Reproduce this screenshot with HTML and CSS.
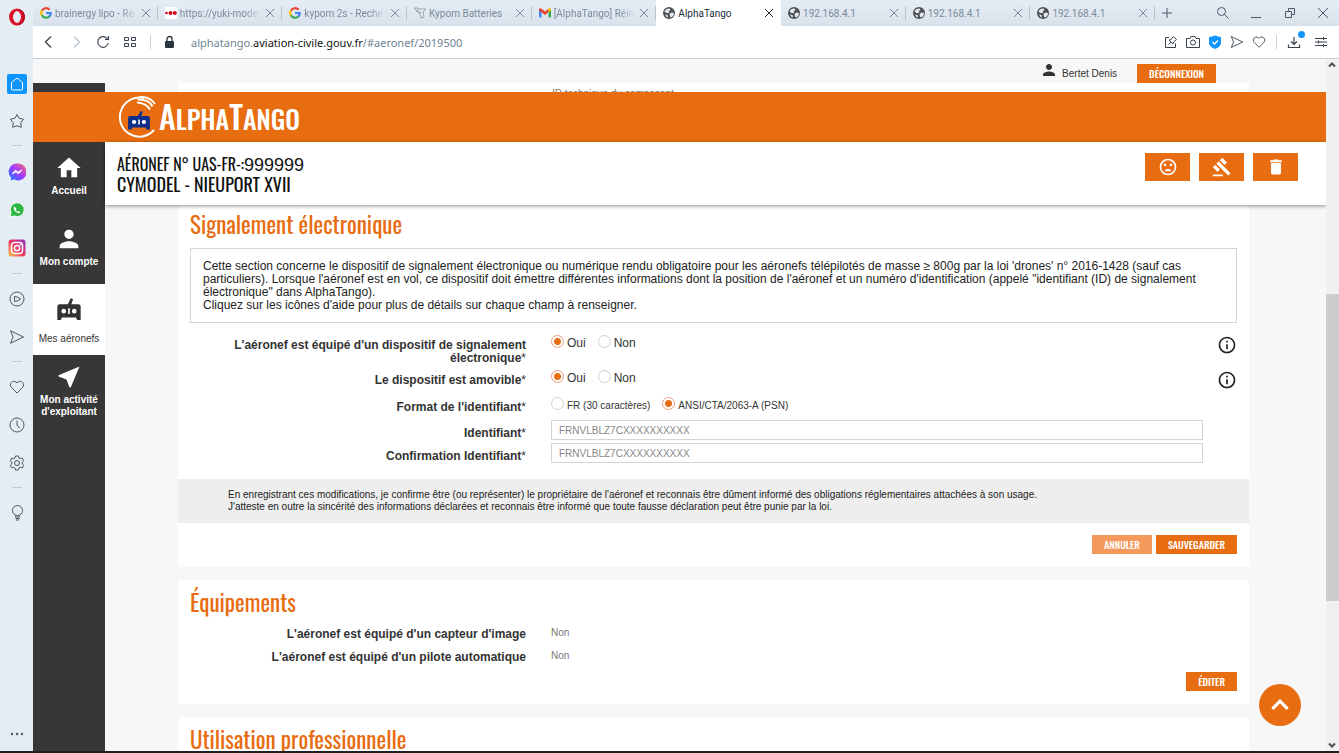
FILE: index.html
```
<!DOCTYPE html>
<html lang="fr">
<head>
  <meta charset="UTF-8">
  <meta name="viewport" content="width=device-width, initial-scale=1.0">
  <title>AlphaTango</title>
  <link rel="stylesheet" href="styles.css">
</head>
<body>

  <!-- shared icons -->
  <svg class="sprite" aria-hidden="true">
    <symbol id="i-x" viewBox="0 0 12 12"><path d="M2 2l8 8M10 2l-8 8" fill="none" stroke="currentColor"/></symbol>
    <symbol id="i-globe" viewBox="0 0 12 12"><circle cx="6" cy="6" r="6" fill="#4d5156"/><path d="M2 3.500Q4 1 6.500 1.500L7.500 3 5.500 4.500 6.500 6H3.500L1.500 4.500zM6.500 7L8.500 5.500 11 6Q11 9 8 10.500L7 9.500zM2 7.500L4.500 8 5 10.500Q3 10 2 7.500z" fill="#e6ebf0"/></symbol>
    <symbol id="i-google" viewBox="0 0 12 12" fill="none" stroke-width="2.200"><path d="M9.600 2.700A4.800 4.800 0 0 0 1.900 3.700" stroke="#ea4335"/><path d="M1.900 3.600a4.800 4.800 0 0 0 0 4.800" stroke="#fbbc05"/><path d="M1.900 8.300a4.800 4.800 0 0 0 7.300 1.300" stroke="#34a853"/><path d="M9.100 9.700A4.800 4.800 0 0 0 10.800 6H6" stroke="#4285f4"/></symbol>
    <symbol id="i-user" viewBox="0 0 24 24"><path fill="currentColor" d="M12 12c2.210 0 4-1.790 4-4s-1.790-4-4-4-4 1.790-4 4 1.790 4 4 4zm0 2c-2.670 0-8 1.340-8 4v2h16v-2c0-2.660-5.330-4-8-4z"/></symbol>
    <symbol id="i-remote" viewBox="0 0 24 24"><path fill="currentColor" fill-rule="evenodd" d="M11 7l2.500-5 2 .8L14 7h6a2 2 0 0 1 2 2v11.500h-3l-1-2H6l-1 2H2V9a2 2 0 0 1 2-2zM7.500 11a2 2 0 1 0 0 4 2 2 0 0 0 0-4zm9 0a2 2 0 1 0 0 4 2 2 0 0 0 0-4zM11.300 10.500h1.400v5h-1.400z"/></symbol>
    <symbol id="i-info" viewBox="0 0 24 24"><path fill="currentColor" d="M11 17h2v-6h-2v6zm1-15C6.480 2 2 6.480 2 12s4.480 10 10 10 10-4.480 10-10S17.520 2 12 2zm0 18c-4.410 0-8-3.590-8-8s3.590-8 8-8 8 3.590 8 8-3.590 8-8 8zM11 9h2V7h-2v2z"/></symbol>
    <symbol id="i-heart" viewBox="0 0 16 16"><path d="M8 14L2.500 8.500C-.5 5 3.500.5 7 3L8 4l1-1c3.500-2.500 7.500 2 4.500 5.500z" fill="none" stroke="currentColor" stroke-linejoin="round"/></symbol>
    <symbol id="i-send" viewBox="0 0 16 16"><path d="M1.500 1.800L14.500 8 1.500 14.200 4 8z" fill="none" stroke="currentColor" stroke-linejoin="round"/></symbol>
  </svg>

  <div class="browser">

    <aside class="opera">
      <button class="opera-logo" aria-label="Opera"><svg viewBox="0 0 18 18"><ellipse cx="9" cy="9" rx="6" ry="6.500" fill="none" stroke="#d9152b" stroke-width="4"/><ellipse cx="9" cy="9" rx="3.600" ry="6" fill="#e4ecf4"/><path d="M11 1.500a8 8 0 0 1 0 15" fill="none" stroke="#a70014" stroke-width="1"/></svg></button>
      <button class="opera-home" aria-label="Accueil"><svg viewBox="0 0 20 20"><path d="M4.500 8.500L10 4l5.500 4.500V15a1 1 0 0 1-1 1h-9a1 1 0 0 1-1-1z" fill="none" stroke="#fff"/></svg></button>
      <button class="opera-star" aria-label="Favoris"><svg viewBox="0 0 16 16"><path d="M8 1.500l2.100 3.800 4.400.9-2.700 3.600.5 4.500L8 12.800l-4.300 1.500.5-4.500-2.700-3.600 4.400-.9z" fill="none" stroke="currentColor" stroke-linejoin="round"/></svg></button>
      <hr>
      <button class="opera-app first" aria-label="Messenger"><svg viewBox="0 0 18 18"><defs><linearGradient id="ms" x1="0" y1="1" x2="1" y2="0"><stop offset="0" stop-color="#0a7cff"/><stop offset=".5" stop-color="#a13bff"/><stop offset="1" stop-color="#ff6a68"/></linearGradient></defs><path d="M9 .5a8.300 8.300 0 0 0-6 14V17.500l2.800-1.200A8.500 8.500 0 1 0 9 .5z" fill="url(#ms)"/><path d="M4 11l3.500-3.800 2.500 2L14 7l-3.500 3.800-2.500-2z" fill="#fff" stroke="#fff"/></svg></button>
      <button class="opera-app" aria-label="WhatsApp"><svg viewBox="0 0 18 18"><path d="M2 16l1-4.200A7 7 0 1 1 6.300 15z" fill="#2eb843" stroke="#fff"/><path d="M6.500 5.500c-1.500 1-.8 3.300 1 5s4 2.300 5 .8l-1.700-1.300-1 .8c-.8-.3-1.800-1.300-2-2l.8-1z" fill="#fff"/></svg></button>
      <button class="opera-app" aria-label="Instagram"><svg viewBox="0 0 18 18"><defs><linearGradient id="ig" x1="0" y1="1" x2="1" y2="0"><stop offset="0" stop-color="#ffc745"/><stop offset=".5" stop-color="#ee3364"/><stop offset="1" stop-color="#8a3ac8"/></linearGradient></defs><rect x=".5" y=".5" width="17" height="17" rx="3" fill="url(#ig)"/><g fill="none" stroke="#fff" stroke-width="1.500"><rect x="3.500" y="3.500" width="11" height="11" rx="3"/><circle cx="9" cy="9" r="2.600"/></g><circle cx="12.300" cy="5.700" r=".8" fill="#fff"/></svg></button>
      <hr>
      <button class="opera-tool" aria-label="Lecteur"><svg viewBox="0 0 16 16"><g fill="none" stroke="currentColor" stroke-linejoin="round"><circle cx="8" cy="8" r="7"/><path d="M5.500 5.500Q9 5.500 11.500 8 9 10.500 5.500 10.500z"/></g></svg></button>
      <button class="opera-tool wide" aria-label="Flow"><svg><use href="#i-send"/></svg></button>
      <hr>
      <button class="opera-tool" aria-label="Signets"><svg><use href="#i-heart"/></svg></button>
      <button class="opera-tool wide" aria-label="Historique"><svg viewBox="0 0 16 16"><g fill="none" stroke="currentColor"><circle cx="8" cy="8" r="7"/><path d="M8 3.500V8l2.500 3"/></g></svg></button>
      <button class="opera-tool wide" aria-label="Paramètres"><svg viewBox="0 0 16 16"><g fill="none" stroke="currentColor" stroke-linejoin="round"><circle cx="8" cy="8" r="2.500"/><path d="M6.500 1h3l.4 1.900 1.500.8 1.900-.6 1.500 2.600L13.300 7v2l1.500 1.300-1.500 2.600-1.900-.6-1.500.8-.4 1.900h-3l-.4-1.900-1.500-.8-1.900.6-1.500-2.600L2.700 9V7L1.200 5.700l1.500-2.600 1.900.6 1.500-.8z"/></g></svg></button>
      <hr>
      <button class="opera-tool" aria-label="Astuces"><svg viewBox="0 0 16 16"><g fill="none" stroke="currentColor"><circle cx="8.500" cy="5.500" r="5"/><path d="M6.500 10.500v1.500h4v-1.500M6.500 13.500h4M7 15h3"/></g></svg></button>
      <button class="opera-more" aria-label="Plus"><svg viewBox="0 0 16 16"><g fill="#4d5865"><circle cx="3" cy="8" r="1.200"/><circle cx="8" cy="8" r="1.200"/><circle cx="13" cy="8" r="1.200"/></g></svg></button>
    </aside>

    <div class="window">

      <div class="tabbar">
        <div class="tabs">
          <div class="tab"><svg><use href="#i-google"/></svg><span class="fade">brainergy lipo - Re</span><button aria-label="Fermer"><svg><use href="#i-x"/></svg></button></div>
          <div class="tab"><svg viewBox="0 0 12 12"><path fill="#fff" d="M0 0h12v12H0z"/><circle cx="1.500" cy="6" r="1.300" fill="#d0021b"/><circle cx="5.500" cy="6" r="2" fill="#d0021b"/><circle cx="9.800" cy="6" r="2" fill="#d0021b"/></svg><span class="fade">https://yuki-mode</span><button aria-label="Fermer"><svg><use href="#i-x"/></svg></button></div>
          <div class="tab"><svg><use href="#i-google"/></svg><span class="fade">kypom 2s - Reche</span><button aria-label="Fermer"><svg><use href="#i-x"/></svg></button></div>
          <div class="tab"><svg viewBox="0 0 12 12"><path d="M0 1h4l1 1h7L9 5l1 5-3 1-1-4zM2 4l5 2M3 2l3 5" fill="none" stroke="#a2a5a8"/></svg><span>Kypom Batteries</span><button aria-label="Fermer"><svg><use href="#i-x"/></svg></button></div>
          <div class="tab"><svg viewBox="0 0 12 12"><path d="M0 2h2.500v8.500H1A1 1 0 0 1 0 9.500z" fill="#4285f4"/><path d="M9.500 2H12v7.500a1 1 0 0 1-1 1H9.500z" fill="#34a853"/><path d="M0 2q1-1.500 2.500-.3L6 4.500l3.500-2.800v3.500L6 8 2.500 5.200 0 3.500z" fill="#ea4335"/><path d="M9.500 1.700Q11 .5 12 2v1.500L9.500 5.200z" fill="#fbbc04"/></svg><span class="fade">[AlphaTango] Réin</span><button aria-label="Fermer"><svg><use href="#i-x"/></svg></button></div>
          <div class="tab active"><svg><use href="#i-globe"/></svg><span>AlphaTango</span><button aria-label="Fermer"><svg><use href="#i-x"/></svg></button></div>
          <div class="tab"><svg><use href="#i-globe"/></svg><span>192.168.4.1</span><button aria-label="Fermer"><svg><use href="#i-x"/></svg></button></div>
          <div class="tab"><svg><use href="#i-globe"/></svg><span>192.168.4.1</span><button aria-label="Fermer"><svg><use href="#i-x"/></svg></button></div>
          <div class="tab"><svg><use href="#i-globe"/></svg><span>192.168.4.1</span><button aria-label="Fermer"><svg><use href="#i-x"/></svg></button></div>
        </div>
        <div class="window-buttons">
          <button class="new-tab" aria-label="Nouvel onglet"><svg viewBox="0 0 12 12"><path d="M6 1v10M1 6h10" stroke="currentColor"/></svg></button>
          <button aria-label="Rechercher"><svg viewBox="0 0 12 12"><g fill="none" stroke="currentColor"><circle cx="4.500" cy="4.500" r="4"/><path d="M7.500 7.500l4 4"/></g></svg></button>
          <button aria-label="Réduire"><svg viewBox="0 0 12 12"><path d="M1 10.500h10" stroke="currentColor"/></svg></button>
          <button aria-label="Restaurer"><svg viewBox="0 0 12 12"><g fill="none" stroke="currentColor"><path d="M1.500 4.500h6v6h-6zM4.500 4V1.500h6v6H8"/></g></svg></button>
          <button aria-label="Fermer la fenêtre"><svg viewBox="0 0 12 12"><path d="M1 1l10 10M11 1L1 11" stroke="currentColor"/></svg></button>
        </div>
      </div>

      <div class="addressbar">
        <button aria-label="Précédent"><svg viewBox="0 0 14 14"><path d="M9 1.500L3.500 7 9 12.500" fill="none" stroke="currentColor" stroke-width="1.300"/></svg></button>
        <button class="off" aria-label="Suivant"><svg viewBox="0 0 14 14"><path d="M5 1.500L10.500 7 5 12.500" fill="none" stroke="currentColor" stroke-width="1.300"/></svg></button>
        <button aria-label="Recharger"><svg viewBox="0 0 14 14"><path d="M11.500 4A5.300 5.300 0 1 0 12.300 8M12.500 1v3.500H9" fill="none" stroke="currentColor" stroke-width="1.200"/></svg></button>
        <button aria-label="Accès rapide"><svg viewBox="0 0 14 14"><path d="M1.500 2.500h4v3h-4zM8.500 2.500h4v3h-4zM1.500 8.500h4v3h-4zM8.500 8.500h4v3h-4z" fill="none" stroke="currentColor"/></svg></button>
        <i class="sep"></i>
        <svg class="lock" viewBox="0 0 14 14"><rect x="1" y="6" width="9" height="7" rx="1" fill="#2b3640"/><path d="M3 6V4a2.500 2.500 0 0 1 5 0v2" fill="none" stroke="#2b3640" stroke-width="1.300"/></svg>
        <span class="url">alphatango.<b>aviation-civile.gouv.fr</b>/#aeronef/2019500</span>
        <div class="address-tools">
          <button aria-label="Épingler"><svg viewBox="0 0 14 14"><path d="M5 2.500H1.500v10h10V8.500M4.500 9.500l2.500-2.500M5 5l4 4 .5-2L12.500 4.500l-3-3L7 4.500z" fill="none" stroke="currentColor"/></svg></button>
          <button aria-label="Instantané"><svg viewBox="0 0 14 14"><g fill="none" stroke="currentColor"><path d="M.5 3.500H4l1-2h4l1 2h3.500v9H.5z"/><circle cx="7" cy="7.500" r="2.500"/></g></svg></button>
          <button aria-label="Bloqueur"><svg viewBox="0 0 14 14"><path d="M7 .5l6 1.700V8q0 3.500-6 6-6-2.500-6-6V2.200z" fill="#0e95ff"/><path d="M4.500 7l2 2 3.500-3.500" fill="none" stroke="#fff" stroke-width="1.300"/></svg></button>
          <button aria-label="Envoyer"><svg><use href="#i-send"/></svg></button>
          <button aria-label="Signet"><svg><use href="#i-heart"/></svg></button>
          <i class="sep"></i>
          <button class="download" aria-label="Téléchargements"><svg viewBox="0 0 14 14"><path d="M7 2v7M4 6.500l3 3 3-3M1.500 9.500v3h11v-3" fill="none" stroke="currentColor" stroke-width="1.200"/></svg></button>
          <button aria-label="Configuration"><svg viewBox="0 0 14 14"><path d="M1 3.500h12M1 7h12M1 10.500h12M9.500 2v3M4.500 5.500v3M9.500 9v3" stroke="currentColor"/></svg></button>
        </div>
      </div>

      <div class="viewport">
        <div class="page">

          <div class="userbar">
            <svg><use href="#i-user"/></svg>
            <span>Bertet Denis</span>
            <button class="btn">DÉCONNEXION</button>
          </div>

          <div class="strip">
            <div class="strip-card">ID technique du composant</div>
          </div>

          <header class="banner">
            <svg viewBox="0 0 42 44"><g fill="none" stroke="#fff" stroke-width="2"><path d="M27 3.200A19.500 19.500 0 1 0 37 35"/><path d="M20 7.500Q29 8 33 14.500M20.500 4.500Q32 4 35.500 11.500M22 2Q33 1 38 9"/></g><svg x="10" y="15" width="24" height="22" viewBox="1 1 22 22" preserveAspectRatio="none" color="#0d2f87"><path d="M5 10h14v6H5z" fill="#fff"/><use href="#i-remote" width="24" height="24"/></svg></svg>
            <span class="brand"><b>A</b>LPHA<b>T</b>ANGO</span>
          </header>

          <div class="body">

            <nav class="menu">
              <a href="#accueil"><svg viewBox="0 0 24 24"><path fill="currentColor" d="M10 20v-6h4v6h5v-8h3L12 3 2 12h3v8z"/></svg>Accueil</a>
              <a href="#compte"><svg><use href="#i-user"/></svg>Mon compte</a>
              <a href="#aeronefs" class="active"><svg><use href="#i-remote"/></svg>Mes aéronefs</a>
              <a href="#activite" class="two-lines"><svg viewBox="0 0 24 24"><path fill="currentColor" d="M21 3L3 10.530v.980l6.840 2.650L12.480 21h.980L21 3z"/></svg>Mon activité d'exploitant</a>
            </nav>

            <main>
              <div class="titlebar">
                <h1><small>AÉRONEF N° UAS-FR-:</small><span>999999</span><br>CYMODEL - NIEUPORT XVII</h1>
                <div class="actions">
                  <button class="btn-icon" aria-label="Déclarer perdu"><svg viewBox="0 0 24 24"><g fill="none" stroke="#fff" stroke-width="2"><circle cx="12" cy="12" r="9"/><path d="M7.500 17Q9 14 12 14t4.500 3z" fill="#fff" stroke="none"/></g><circle cx="8.500" cy="9.500" r="1.600" fill="#fff"/><circle cx="15.500" cy="9.500" r="1.600" fill="#fff"/></svg></button>
                  <button class="btn-icon" aria-label="Céder"><svg viewBox="0 0 24 24"><path fill="#fff" d="M1 21h12v2H1zM5.245 8.070l2.830-2.827 14.140 14.142-2.828 2.828zM12.317 1l5.657 5.656-2.830 2.830-5.654-5.660zM3.825 9.485l5.657 5.657-2.828 2.828-5.657-5.657z"/></svg></button>
                  <button class="btn-icon" aria-label="Supprimer"><svg viewBox="0 0 24 24"><path fill="#fff" d="M6 19c0 1.100.9 2 2 2h8c1.100 0 2-.9 2-2V7H6v12zM19 4h-3.500l-1-1h-5l-1 1H5v2h14V4z"/></svg></button>
                </div>
              </div>

              <div class="cards">
                <form class="card">
                  <h2>Signalement électronique</h2>
                  <p class="notice">Cette section concerne le dispositif de signalement électronique ou numérique rendu obligatoire pour les aéronefs télépilotés de masse ≥ 800g par la loi 'drones' n° 2016-1428 (sauf cas particuliers). Lorsque l'aéronef est en vol, ce dispositif doit émettre différentes informations dont la position de l'aéronef et un numéro d'identification (appelé "identifiant (ID) de signalement électronique" dans AlphaTango).<br>Cliquez sur les icônes d'aide pour plus de détails sur chaque champ à renseigner.</p>

                  <div class="row tall">
                    <span class="label" id="l-equipe">L'aéronef est équipé d'un dispositif de signalement électronique<i>*</i></span>
                    <div class="choices" role="radiogroup" aria-labelledby="l-equipe">
                      <label><input type="radio" name="equipe" checked>Oui</label>
                      <label><input type="radio" name="equipe">Non</label>
                    </div>
                    <button type="button" class="help" aria-label="Aide"><svg><use href="#i-info"/></svg></button>
                  </div>
                  <div class="row medium">
                    <span class="label" id="l-amovible">Le dispositif est amovible<i>*</i></span>
                    <div class="choices" role="radiogroup" aria-labelledby="l-amovible">
                      <label><input type="radio" name="amovible" checked>Oui</label>
                      <label><input type="radio" name="amovible">Non</label>
                    </div>
                    <button type="button" class="help" aria-label="Aide"><svg><use href="#i-info"/></svg></button>
                  </div>
                  <div class="row">
                    <span class="label" id="l-format">Format de l'identifiant<i>*</i></span>
                    <div class="choices small" role="radiogroup" aria-labelledby="l-format">
                      <label><input type="radio" name="format">FR (30 caractères)</label>
                      <label><input type="radio" name="format" checked>ANSI/CTA/2063-A (PSN)</label>
                    </div>
                  </div>
                  <div class="row input-row">
                    <label class="label" for="ident">Identifiant<i>*</i></label>
                    <input class="field" id="ident" type="text" value="FRNVLBLZ7CXXXXXXXXXX">
                  </div>
                  <div class="row input-row">
                    <label class="label" for="ident2">Confirmation Identifiant<i>*</i></label>
                    <input class="field" id="ident2" type="text" value="FRNVLBLZ7CXXXXXXXXXX">
                  </div>

                  <p class="legal">En enregistrant ces modifications, je confirme être (ou représenter) le propriétaire de l'aéronef et reconnais être dûment informé des obligations réglementaires attachées à son usage.<br>J'atteste en outre la sincérité des informations déclarées et reconnais être informé que toute fausse déclaration peut être punie par la loi.</p>

                  <div class="buttons">
                    <button type="button" class="btn light">ANNULER</button>
                    <button type="button" class="btn">SAUVEGARDER</button>
                  </div>
                </form>

                <section class="card">
                  <h2>Équipements</h2>
                  <div class="row">
                    <span class="label">L'aéronef est équipé d'un capteur d'image</span>
                    <span class="value">Non</span>
                  </div>
                  <div class="row">
                    <span class="label">L'aéronef est équipé d'un pilote automatique</span>
                    <span class="value">Non</span>
                  </div>
                  <div class="buttons near">
                    <button class="btn">ÉDITER</button>
                  </div>
                </section>

                <section class="card">
                  <h2>Utilisation professionnelle</h2>
                </section>
              </div>
            </main>
          </div>

          <button class="to-top" aria-label="Haut de page"><svg viewBox="0 0 24 24"><path d="M5 15.500L12 8.500l7 7" fill="none" stroke="#fff" stroke-width="3"/></svg></button>
        </div>

        <div class="scrollbar">
          <svg viewBox="0 0 12 12"><path d="M3 7.500l3-3 3 3" fill="none" stroke="#505050" stroke-width="2"/></svg>
          <div class="track"><div class="thumb"></div></div>
          <svg viewBox="0 0 12 12"><path d="M3 4.500l3 3 3-3" fill="none" stroke="#505050" stroke-width="2"/></svg>
        </div>
      </div>
    </div>
  </div>

</body>
</html>
```
FILE: styles.css
```
/* ---------------- GENERAL ---------------- */
* {
  box-sizing: border-box;
}

body {
  margin: 0;
  font-family: "Liberation Sans", Arial, sans-serif;
  font-size: 12px;
  color: #333;
  overflow: hidden;
}

button {
  border: 0;
  padding: 0;
  background: none;
  color: inherit;
  font: inherit;
  cursor: pointer;
}

svg {
  display: block;
  flex: none;
}

h1, h2, p {
  margin: 0;
}

.sprite {
  display: none;
}

.browser {
  display: flex;
  height: 100vh;
  border-bottom: 2px solid #202124;
}

/* ---------------- OPERA SIDEBAR ---------------- */
.opera {
  display: flex;
  flex-direction: column;
  align-items: center;
  flex: none;
  width: 33px;
  padding-bottom: 9px;
  background: #e4ecf4;
  color: #4d5865;
}

.opera svg {
  width: 16px;
  height: 16px;
}

.opera hr {
  width: 10px;
  margin: 16px 0 0;
  border: 0;
  border-top: 1px solid #bccbd9;
}

.opera-logo {
  margin-top: 8px;
}

.opera .opera-logo svg,
.opera .opera-app svg {
  width: 18px;
  height: 18px;
}

.opera-home {
  margin-top: 48px;
  border-radius: 2px;
  background: #0e95ff;
}

.opera .opera-home svg {
  width: 20px;
  height: 20px;
}

.opera-star {
  margin-top: 19px;
}

.opera-app {
  margin-top: 20px;
}

.opera-app.first {
  margin-top: 17px;
}

.opera-tool {
  margin-top: 17px;
}

.opera-tool.wide {
  margin-top: 22px;
}

.opera-more {
  margin-top: auto;
}

/* ---------------- TABS ---------------- */
.window {
  display: flex;
  flex-direction: column;
  flex: 1;
  min-width: 0;
}

.tabbar {
  display: flex;
  height: 26px;
  background: linear-gradient(#e4ecf4, #d9e2eb);
  color: #4d5865;
  font-family: Roboto, "Noto Sans", sans-serif;
  font-size: 10px;
}

.tabs {
  display: flex;
  flex: 1;
  min-width: 0;
}

.tab {
  display: flex;
  align-items: center;
  flex: 1;
  min-width: 0;
  gap: 3px;
  padding: 0 6px 0 7px;
  color: #7b8b9a;
  background: linear-gradient(#b8c5d1, #b8c5d1) right center / 1px 14px no-repeat;
}

.tab svg {
  width: 12px;
  height: 12px;
}

.tab span {
  flex: 1;
  overflow: hidden;
  white-space: nowrap;
}

.tab .fade {
  mask-image: linear-gradient(90deg, #000 80%, transparent);
}

.tab.active {
  background: #fff;
  color: #22303c;
}

.window-buttons {
  display: flex;
  align-items: center;
  justify-content: space-between;
  width: 184px;
  padding: 0 10px 0 6px;
}

.window-buttons svg {
  width: 12px;
  height: 12px;
}

.new-tab {
  margin-right: 22px;
}

/* ---------------- ADDRESS BAR ---------------- */
.addressbar {
  display: flex;
  align-items: center;
  flex: none;
  height: 33px;
  gap: 13px;
  padding: 0 11px 0 9px;
  border-bottom: 1px solid #c3d0dc;
  background: #fff;
  color: #38434e;
}

.addressbar svg {
  width: 14px;
  height: 14px;
}

.addressbar .off {
  color: #b9c3cc;
}

.sep {
  width: 1px;
  height: 14px;
  background: #cbd3da;
}

.url {
  font-family: "Noto Sans", "Open Sans", sans-serif;
  font-size: 11px;
  color: #6f8394;
}

.url b {
  color: #111;
  font-weight: normal;
}

.address-tools {
  display: flex;
  align-items: center;
  gap: 8px;
  margin-left: auto;
}

.address-tools svg {
  width: 14px;
  height: 14px;
}

.address-tools .sep {
  margin: 0 2px;
}

.download {
  position: relative;
  margin-right: 5px;
}

.download::after {
  content: "";
  position: absolute;
  top: -4px;
  right: -4px;
  width: 7px;
  height: 7px;
  border-radius: 50%;
  background: #0e95ff;
}

/* ---------------- PAGE ---------------- */
.viewport {
  display: flex;
  flex: 1;
  min-height: 0;
}

.page {
  position: relative;
  display: flex;
  flex-direction: column;
  flex: 1;
  min-width: 0;
  overflow: hidden;
  background: #f7f7f7;
}

.userbar {
  display: flex;
  align-items: center;
  justify-content: flex-end;
  flex: none;
  height: 24px;
  padding: 4px 110px 0 0;
  font-size: 10px;
}

.userbar svg {
  width: 18px;
  height: 18px;
  margin: 0 4px 6px 0;
}

.userbar .btn {
  margin-left: 20px;
}

.strip {
  flex: none;
  height: 9px;
  padding: 0 77px 0 145px;
  background: linear-gradient(#373737, #373737) left / 72px no-repeat;
}

.strip-card {
  height: 9px;
  padding: 5px 0 0 374px;
  overflow: hidden;
  background: #fff;
  color: #777;
  font-size: 10px;
}

.banner {
  display: flex;
  align-items: center;
  flex: none;
  height: 50px;
  padding-left: 84px;
  background: #e86c10;
}

.banner > svg {
  width: 42px;
  height: 44px;
}

.brand,
h1,
h2,
.btn {
  font-family: Oswald, "Roboto Condensed", "Liberation Sans Narrow", "Liberation Sans", sans-serif;
}

.brand {
  padding-bottom: 4px;
  color: #fff;
  font-size: 26px;
  font-weight: 500;
}

.brand b {
  font-size: 32px;
  font-weight: 500;
}

.body {
  display: flex;
  flex: 1;
  min-height: 0;
}

/* ---------------- MENU ---------------- */
.menu {
  flex: none;
  width: 72px;
  background: #373737;
}

.menu a {
  display: flex;
  flex-direction: column;
  align-items: center;
  height: 71px;
  padding: 12px 4px 0;
  color: #fff;
  font-size: 10px;
  font-weight: bold;
  line-height: 12px;
  text-align: center;
  text-decoration: none;
}

.menu svg {
  width: 28px;
  height: 28px;
  margin-bottom: 3px;
}

.menu a.active {
  background: #fff;
  color: #333;
  font-weight: normal;
}

.menu .active svg {
  margin-bottom: 9px;
}

.menu .two-lines {
  padding-top: 8px;
}

/* ---------------- TITLE BAR ---------------- */
main {
  display: flex;
  flex-direction: column;
  flex: 1;
  min-width: 0;
}

.titlebar {
  display: flex;
  justify-content: space-between;
  flex: none;
  z-index: 1;
  height: 63px;
  padding: 11px 28px 0 12px;
  background: #fff;
  box-shadow: 0 1px 4px rgba(0, 0, 0, 0.45);
}

h1 {
  color: #111;
  font-size: 18px;
  font-weight: normal;
  line-height: 20px;
}

h1 small {
  font-size: 16px;
  line-height: 1;
}

h1 span {
  font-family: "Liberation Sans", Arial, sans-serif;
  line-height: 1;
}

.actions {
  display: flex;
  gap: 9px;
}

.btn-icon {
  display: flex;
  align-items: center;
  justify-content: center;
  width: 45px;
  height: 28px;
  background: #e86c10;
}

.btn-icon svg {
  width: 20px;
  height: 20px;
}

/* ---------------- CARDS ---------------- */
.cards {
  display: flex;
  flex-direction: column;
  gap: 13px;
  margin-top: -3px;
  padding: 0 77px 0 73px;
}

.card {
  padding-bottom: 13px;
  background: #fff;
}

h2 {
  padding: 2px 12px;
  color: #e86c10;
  font-size: 23px;
  font-weight: normal;
  line-height: 40px;
}

.notice {
  margin: 2px 12px 12px;
  padding: 11px 12px 10px;
  border: 1px solid #d5d5d5;
  color: #222;
  font-size: 12px;
  line-height: 13px;
}

.row {
  display: grid;
  grid-template-columns: 348px 1fr 20px;
  column-gap: 25px;
  min-height: 23px;
  padding-right: 12px;
}

.row.tall {
  min-height: 35px;
}

.row.medium {
  min-height: 27px;
}

.label {
  padding: 4px 0 0 48px;
  font-size: 12px;
  font-weight: bold;
  line-height: 13px;
  text-align: right;
}

.input-row .label {
  padding-top: 7px;
}

.label i {
  font-style: normal;
  font-weight: normal;
}

.choices {
  display: flex;
  align-items: flex-start;
  gap: 12px;
}

.choices label {
  display: flex;
  align-items: center;
  gap: 3px;
  height: 16px;
}

.choices.small {
  font-size: 10px;
}

.choices input {
  appearance: none;
  width: 13px;
  height: 13px;
  margin: 0 0 3px;
  border: 1px solid #d0d0d0;
  border-radius: 50%;
  background: #fff;
}

.choices input:checked {
  border-color: #f0987c;
  background: radial-gradient(circle, #e86c10 3px, #fff 4px);
}

.help {
  align-self: start;
  color: #222;
}

.help svg {
  width: 20px;
  height: 20px;
}

.field {
  grid-column: 2 / 4;
  height: 20px;
  margin-right: 34px;
  padding: 0 7px;
  border: 1px solid #d5d5d5;
  color: #888;
  font-family: inherit;
  font-size: 10px;
}

.value {
  padding-top: 3px;
  color: #777;
  font-size: 10px;
}

.legal {
  margin-top: 13px;
  padding: 10px 50px;
  background: #eee;
  color: #222;
  font-size: 10px;
  line-height: 12px;
}

.buttons {
  display: flex;
  justify-content: flex-end;
  gap: 4px;
  padding: 12px 12px 0;
}

.buttons.near {
  padding-top: 2px;
}

.btn {
  height: 19px;
  padding: 0 12px;
  background: #e86c10;
  color: #fff;
  font-size: 10px;
  font-weight: 500;
}

.btn.light {
  background: #f4985b;
}

.to-top {
  position: absolute;
  right: 25px;
  bottom: 25px;
  display: flex;
  align-items: center;
  justify-content: center;
  width: 42px;
  height: 42px;
  border-radius: 50%;
  background: #e86c10;
}

.to-top svg {
  width: 26px;
  height: 26px;
}

/* ---------------- SCROLLBAR ---------------- */
.scrollbar {
  display: flex;
  flex-direction: column;
  flex: none;
  width: 13px;
  background: #f0f0f0;
}

.scrollbar svg {
  width: 12px;
  height: 12px;
}

.track {
  display: flex;
  flex-direction: column;
  flex: 1;
  padding-top: 223px;
}

.thumb {
  height: 69%;
  background: #cdcdcd;
}
```
